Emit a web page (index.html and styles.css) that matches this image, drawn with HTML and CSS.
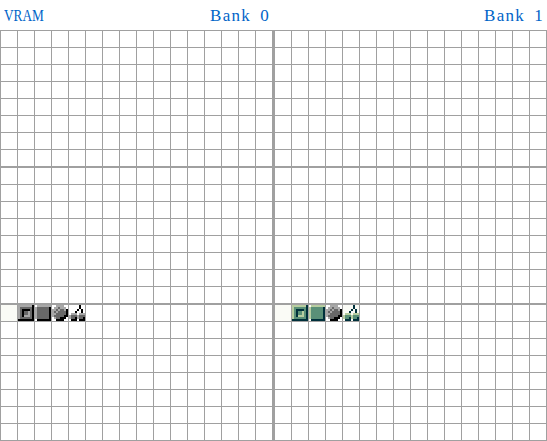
FILE: index.html
```
<!DOCTYPE html>
<html lang="en">
<head>
<meta charset="utf-8">
<title>VRAM</title>
<link rel="stylesheet" href="styles.css">
</head>
<body>
<header class="bar">
  <div class="bank-head"><span class="title">VRAM</span><span class="label">Bank 0</span></div>
  <div class="bank-head last"><span></span><span class="label">Bank 1</span></div>
</header>
<main class="banks">
  <section class="bank" data-palette="gray"></section>
  <section class="bank" data-palette="green"></section>
</main>
<script src="vram.js"></script>
</body>
</html>
```
FILE: styles.css
```
* { box-sizing: border-box; }
body { margin: 0; background: #fff; width: 547px; height: 441px; overflow: hidden; }
.bar {
  display: grid;
  grid-template-columns: 273px 274px;
  height: 30px;
  color: #0064c8;
  font: 17px/31px "Liberation Serif", serif;
}
.bank-head { display: flex; justify-content: space-between; padding: 0 4px; }
.title { transform: scaleX(0.78); transform-origin: left; }
.label { letter-spacing: 1.3px; word-spacing: 3.5px; margin-right: -1px; }
.banks { display: flex; gap: 1px; background: #a0a0a0; }
.bank { display: grid; gap: 1px; width: 273px; }
.block {
  display: grid;
  grid-template-columns: repeat(16, 16px);
  grid-auto-rows: 16px;
  gap: 1px;
  padding: 1px 1px 0;
}
.block:last-child { padding-bottom: 1px; }
.cell { background: #fff; }
.cell svg { display: block; width: 16px; height: 16px; }
```
FILE: vram.js
```
const palettes = {
  blank: ["#fafbf6"],
  gray: ["#ffffff", "#a8a8a8", "#686868", "#000000"],
  green: ["#fafbf6", "#b7cda0", "#5a9078", "#00303b"]
};
// Each digit is a palette index, eight rows of eight pixels per tile.
const tiles = [
  { palette: "blank", rows: "00000000 00000000 00000000 00000000 00000000 00000000 00000000 00000000" },
  { rows: "11111113 12222223 12333323 12322123 12322123 12311123 12222223 33333333" },
  { rows: "01111111 12222223 12222223 12222223 12222223 12222223 12222223 03333333" },
  { palette: "gray", rows: "00111100 01121110 11212213 12122223 11222223 12222233 01223330 00333300" },
  { rows: "00000300 00000300 00003030 00030030 01110111 12221222 12231223 03330333" }
];
function drawTile(rows, colors) {
  const rects = rows.split(" ").map((row, y) =>
    [...row].map((n, x) => `<rect x="${x}" y="${y}" width="1" height="1" fill="${colors[n]}"/>`).join("")).join("");
  return `<svg viewBox="0 0 8 8" shape-rendering="crispEdges">${rects}</svg>`;
}
document.querySelectorAll(".bank").forEach(bank => {
  for (let b = 0; b < 3; b++) {
    const block = document.createElement("div");
    block.className = "block";
    for (let i = 0; i < 128; i++) {
      const cell = document.createElement("div");
      cell.className = "cell";
      const tile = b === 2 && tiles[i];
      if (tile) cell.innerHTML = drawTile(tile.rows, palettes[tile.palette || bank.dataset.palette]);
      block.append(cell);
    }
    bank.append(block);
  }
});
```
